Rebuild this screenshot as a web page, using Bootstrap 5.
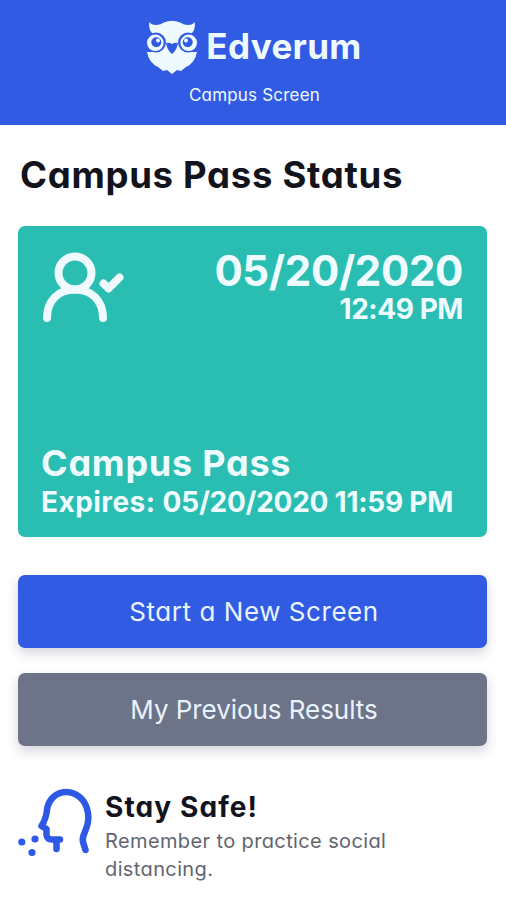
<!DOCTYPE html>
<html lang="en">
<head>
<meta charset="utf-8">
<meta name="viewport" content="width=device-width, initial-scale=1">
<title>Edverum Campus Screen</title>
<link href="https://cdn.jsdelivr.net/npm/bootstrap@5.3.0/dist/css/bootstrap.min.css" rel="stylesheet">
<style>
body{font-family:Inter,"Liberation Sans",sans-serif;font-feature-settings:"cv11" 1,"calt" 0;color:#12131c;background:#fff;overflow:hidden}
.fit{white-space:nowrap}
.top-bar{background:#325be4;color:#effaff;height:125px;padding-top:17px}
.brand-row{height:59px;gap:9px;padding-left:3px}
.brand-name{font-size:35px;font-weight:700;line-height:42px;padding-bottom:1px;letter-spacing:.35px}
.brand-sub{font-size:17px;line-height:24px;margin-top:7px;padding-left:3px;letter-spacing:.2px}
.page-main{padding:28px 19px 0 18px}
.page-title{font-size:36.5px;font-weight:700;line-height:44px;margin:0 0 29px 2px;letter-spacing:.7px}
.pass-card{background:#2abdb2;color:#effcff;height:311px;border-radius:7px;padding:24px 24px 16px}
.pass-date{font-size:42px;font-weight:700;line-height:42px;letter-spacing:-.35px}
.pass-time{font-size:28px;font-weight:700;line-height:34px;letter-spacing:-.45px}
.pass-name{font-size:36px;font-weight:700;line-height:40px;letter-spacing:.75px;margin-left:-1px}
.pass-exp{font-size:28px;font-weight:700;line-height:38px;letter-spacing:-.25px;margin-left:-1px}
.exp-label{letter-spacing:.45px}
.action-list{margin-top:38px;gap:25px}
.action{height:73px;border:0;border-radius:7px;font-size:26px;color:#e8f3ff;box-shadow:0 5px 12px rgba(40,40,80,.2);font-feature-settings:inherit;padding:6px 10px 6px 13px}
.action-new,.action-new:hover{background:#325be4;color:#e8f3ff;letter-spacing:.55px}
.action-old,.action-old:hover{background:#6d7488;color:#e8f3ff;letter-spacing:-.05px}
.safe-row{margin-top:42px}
.safe-text{margin-left:12px;padding-top:2px}
.safe-title{font-size:28px;font-weight:700;line-height:34px;margin:0 0 3px;letter-spacing:1.1px}
.safe-copy{font-size:20px;line-height:28px;color:#62656f;letter-spacing:.38px}
</style>
</head>
<body>
<header class="top-bar d-flex flex-column align-items-center">
  <div class="brand-row d-flex align-items-center">
    <svg width="50" height="54" viewBox="0 0 50 54" aria-hidden="true">
      <path fill="#effaff" d="M2.500 2Q4 5 9 5Q13 5 17 2.500Q25-1 33 2.500Q37 5 41 5Q46 5 47.500 2Q49 9 45 13L41 32H50Q48 43 39 47L34 51L30 50L25 54L20 50L16 51L11 47Q2 43 0 32H9L5 13Q1 9 2.500 2Z"/>
      <circle cx="9" cy="22.500" r="10" fill="#325be4"/><circle cx="41" cy="22.500" r="10" fill="#325be4"/>
      <circle cx="8.300" cy="22.800" r="8.300" fill="#effaff"/><circle cx="41.700" cy="22.800" r="8.300" fill="#effaff"/>
      <circle cx="9.300" cy="22.300" r="5" fill="#325be4"/><circle cx="40.700" cy="22.300" r="5" fill="#325be4"/>
      <circle cx="11" cy="20.500" r="2" fill="#effaff"/><circle cx="39" cy="20.500" r="2" fill="#effaff"/>
      <path fill="#325be4" d="M19 23Q22 22 25 24Q28 22 31 23Q30 30 25 34Q20 30 19 23Z"/>
    </svg>
    <span class="brand-name fit">Edverum</span>
  </div>
  <div class="brand-sub fit">Campus Screen</div>
</header>
<main class="page-main">
  <h1 class="page-title"><span class="fit">Campus Pass Status</span></h1>
  <section class="pass-card d-flex flex-column justify-content-between">
    <div class="d-flex justify-content-between align-items-start">
      <svg width="82" height="72" viewBox="0 0 82 72" fill="none" stroke="#effaff" stroke-width="8" stroke-linecap="round" stroke-linejoin="round" aria-hidden="true">
        <circle cx="33" cy="23" r="16.500"/><path d="M5 68C5 50 17 39.500 33 39.500S61 50 61 68M61.500 33.500L66.500 38.500L77.500 27.500"/>
      </svg>
      <div class="text-end"><div class="pass-date"><span class="fit">05/20/2020</span></div><div class="pass-time"><span class="fit">12:49 PM</span></div></div>
    </div>
    <div><div class="pass-name"><span class="fit">Campus Pass</span></div><div class="pass-exp"><span class="fit"><span class="exp-label">Expires: </span>05/20/2020 11:59 PM</span></div></div>
  </section>
  <div class="action-list d-grid">
    <button class="action action-new btn" type="button"><span class="fit">Start a New Screen</span></button>
    <button class="action action-old btn" type="button"><span class="fit">My Previous Results</span></button>
  </div>
  <section class="safe-row d-flex align-items-start">
    <svg width="75" height="70" viewBox="0 0 75 70" fill="none" stroke="#2d59e4" stroke-width="6.500" stroke-linecap="round" stroke-linejoin="round" aria-hidden="true">
      <path d="M67.500 62L65 54Q64 50 66.500 45C70 36 71 32 70 25C68 12 59 4 48 4C37 4 30 13 29 22Q28 31 23.500 38L28.500 41V47Q29 51.500 34 51.500H42M38.500 52V61"/>
      <g fill="#2d59e4" stroke="none"><circle cx="3.800" cy="54" r="3.600"/><circle cx="17" cy="51" r="3.600"/><circle cx="14" cy="64.500" r="3.600"/></g>
    </svg>
    <div class="safe-text"><h2 class="safe-title"><span class="fit">Stay Safe!</span></h2><div class="safe-copy"><span class="fit">Remember to practice social</span><br><span class="fit">distancing.</span></div></div>
  </section>
</main>
<script src="https://cdn.jsdelivr.net/npm/bootstrap@5.3.0/dist/js/bootstrap.bundle.min.js"></script>
</body>
</html>
